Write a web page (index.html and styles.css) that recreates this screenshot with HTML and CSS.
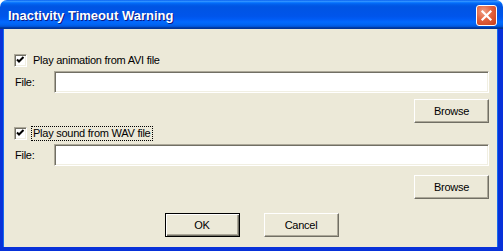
FILE: index.html
```html
<!DOCTYPE html>
<html>
<head>
<meta charset="UTF-8">
<title>Inactivity Timeout Warning</title>
<link rel="stylesheet" href="styles.css">
</head>
<body>
<div class="window">
	<div class="title-bar">
		<span class="title-text">Inactivity Timeout Warning</span>
		<div class="close-btn">
			<svg width="13" height="13" viewBox="0 0 13 13"><path d="M2.5 2.5 L10.5 10.5 M10.5 2.5 L2.5 10.5" stroke="#fff" stroke-width="2.2" stroke-linecap="square"/></svg>
		</div>
	</div>
	<!-- 内容 -->
	<div class="dialog-body">
		<div class="check-row row-first">
			<span class="check-box">
				<svg width="11" height="11" viewBox="0 0 11 11"><path d="M2 4.5 L4 6.5 L8.5 2" fill="none" stroke="#000" stroke-width="2"/></svg>
			</span>
			<span class="check-label">Play animation from AVI file</span>
		</div>
		<div class="file-row row-file1">
			<span class="file-label">File:</span>
			<div class="file-field"></div>
		</div>
		<div class="browse-row row-browse1">
			<div class="btn">Browse</div>
		</div>
		<div class="check-row row-check2">
			<span class="check-box">
				<svg width="11" height="11" viewBox="0 0 11 11"><path d="M2 4.5 L4 6.5 L8.5 2" fill="none" stroke="#000" stroke-width="2"/></svg>
			</span>
			<span class="check-label focused">Play sound from WAV file</span>
		</div>
		<div class="file-row row-file2">
			<span class="file-label">File:</span>
			<div class="file-field"></div>
		</div>
		<div class="browse-row row-browse2">
			<div class="btn">Browse</div>
		</div>
		<div class="action-row">
			<div class="btn btn-default">OK</div>
			<div class="btn">Cancel</div>
		</div>
	</div>
</div>
</body>
</html>
```

FILE: styles.css
```css
*{
	margin:0;
	padding:0;
	box-sizing:border-box;
}
body{
	background:#fff;
	font-family:"Liberation Sans",Arial,sans-serif;
	font-size:11px;
	letter-spacing:-0.25px;
	color:#000;
}
.window{
	width:503px;
	height:251px;
	display:flex;
	flex-direction:column;
	border-radius:7px 7px 0 0;
	overflow:hidden;
}
/* 标题栏 */
.title-bar{
	height:29px;
	flex:none;
	display:flex;
	justify-content:space-between;
	align-items:flex-start;
	padding:0 6px 0 8px;
	background:linear-gradient(to bottom,#0058ee 0%,#3593ff 4%,#288eff 6%,#127dff 8%,#036ffc 10%,#0262ee 14%,#0057e5 20%,#0054e3 24%,#0055eb 56%,#005bf5 66%,#026afe 76%,#0062ef 86%,#0052d6 92%,#0040ab 94%,#003092 100%);
}
.title-text{
	font-family:"Liberation Sans",Arial,sans-serif;
	font-weight:bold;
	font-size:13px;
	letter-spacing:0;
	color:#fff;
	line-height:13px;
	padding-top:9px;
	text-shadow:1px 1px 0 #0a1883;
}
.close-btn{
	width:21px;
	height:21px;
	margin-top:5px;
	border:1px solid #fff;
	border-radius:3px;
	background:radial-gradient(circle at 35% 30%,#f0a085 0%,#e2623e 45%,#c83c1a 100%);
	display:flex;
	align-items:center;
	justify-content:center;
}
.close-btn svg{
	display:block;
}
/* 对话框内容 */
.dialog-body{
	flex:1;
	background:#ece9d8;
	border-left:3px solid #0831d9;
	border-right:5px solid #0831d9;
	border-bottom:4px solid #0831d9;
	box-shadow:inset 1px 0 0 #166aee,inset -1px 0 0 #166aee;
	padding:0 9px 0 11px;
	display:flex;
	flex-direction:column;
}
.check-row{
	display:flex;
	align-items:center;
	height:13px;
}
.row-first{
	margin-top:25px;
}
.row-check2{
	margin-top:4px;
}
.check-box{
	width:13px;
	height:13px;
	flex:none;
	background:#fff;
	border-top:1px solid #aca899;
	border-left:1px solid #aca899;
	border-right:1px solid #fff;
	border-bottom:1px solid #fff;
	box-shadow:inset 1px 1px 0 #716f64,inset -1px -1px 0 #f1efe2;
	display:flex;
	align-items:center;
	justify-content:center;
}
.check-box svg{
	display:block;
}
.check-label{
	margin-left:4px;
	padding:0 1px;
	line-height:13px;
	border:1px solid transparent;
}
.check-label.focused{
	border:1px dotted #000;
	line-height:13px;
}
.file-row{
	display:flex;
	align-items:center;
	height:22px;
}
.row-file1{
	margin-top:4px;
}
.row-file2{
	margin-top:4px;
}
.file-label{
	width:40px;
	padding-left:1px;
	flex:none;
}
.file-field{
	flex:1;
	height:22px;
	background:#fff;
	border-top:1px solid #aca899;
	border-left:1px solid #aca899;
	border-right:1px solid #fff;
	border-bottom:1px solid #fff;
	box-shadow:inset 1px 1px 0 #716f64,inset -1px -1px 0 #f1efe2;
}
.browse-row{
	display:flex;
	justify-content:flex-end;
}
.row-browse1{
	margin-top:6px;
}
.row-browse2{
	margin-top:9px;
}
/* 按钮 */
.btn{
	width:75px;
	height:24px;
	line-height:22px;
	text-align:center;
	background:#ece9d8;
	border-top:1px solid #fff;
	border-left:1px solid #fff;
	border-right:1px solid #716f64;
	border-bottom:1px solid #716f64;
	box-shadow:inset -1px -1px 0 #aca899;
}
.btn-default{
	border:1px solid #000;
	box-shadow:inset 1px 1px 0 #fff,inset -1px -1px 0 #716f64,inset -2px -2px 0 #aca899;
}
.action-row{
	display:flex;
	justify-content:center;
	gap:24px;
	margin-top:14px;
}
```
